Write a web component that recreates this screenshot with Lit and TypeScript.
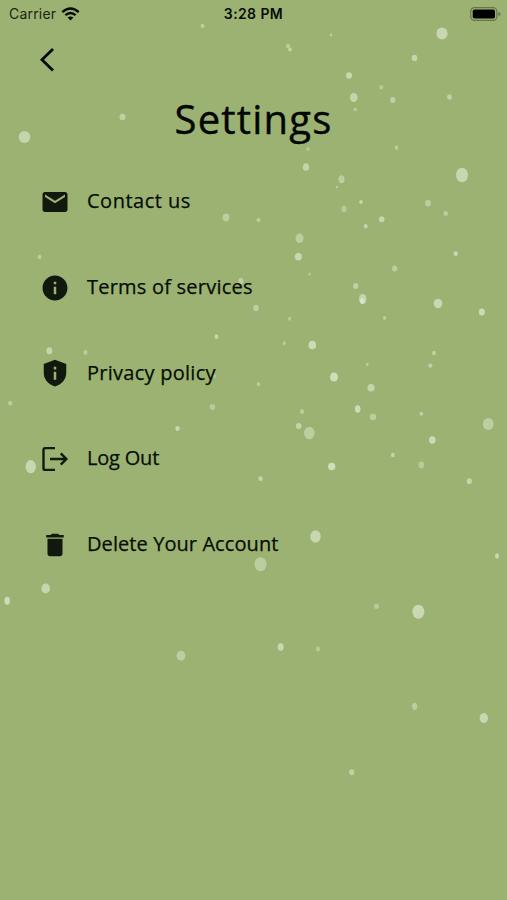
import { LitElement, html, css, svg } from "lit";
import { customElement } from "lit/decorators.js";
import { styleMap } from "lit/directives/style-map.js";

// Snowflakes: centre x, centre y, radius x, radius y, opacity
const FLAKES: number[][] = [
  [202.5, 26, 2, 2.3, 0.4], [122.5, 117, 3, 3.2, 0.45], [24.5, 137, 5.8, 6, 0.5],
  [288, 46, 2, 2.2, 0.4], [290, 49.5, 1.8, 2, 0.5], [331, 35, 1.4, 1.4, 0.4],
  [442, 33.5, 5.6, 6, 0.55], [414.5, 58, 2.8, 3.2, 0.5], [349, 75.5, 3, 3.2, 0.55],
  [381.3, 87.3, 2, 2.2, 0.35], [353.8, 97.5, 3.8, 4.5, 0.5], [392.8, 100, 2.7, 3, 0.45],
  [449.5, 97, 2.4, 2.8, 0.45], [355.3, 109.5, 2, 1.8, 0.35], [396.5, 147.8, 1.7, 2.2, 0.4],
  [308, 149, 1.8, 1.8, 0.35], [306, 167, 3.2, 3.8, 0.5], [462, 175, 6, 7.3, 0.55],
  [341.5, 179.3, 3, 4, 0.4], [337, 187, 1.2, 1.2, 0.4], [361, 202, 1.8, 2, 0.5],
  [428, 203.3, 3, 3.2, 0.4], [344, 209, 2.6, 3.2, 0.35], [445.7, 213.5, 2.3, 2.4, 0.4],
  [381.7, 219.3, 2.8, 3, 0.5], [365.7, 226.3, 2, 2.2, 0.5], [226, 217.5, 3.5, 4, 0.4],
  [258.5, 220, 2, 2, 0.4], [299.5, 238.3, 4, 4.8, 0.4], [298.3, 256.8, 3.6, 3.7, 0.55],
  [39.5, 257, 2, 2.2, 0.4], [455.7, 253.7, 2.2, 2.4, 0.55], [309.5, 274, 1.6, 1.6, 0.3],
  [394.7, 268.5, 2.7, 3, 0.4], [241, 281, 2.5, 3.3, 0.4], [355.7, 286, 2.6, 3, 0.45],
  [362.7, 299, 3.7, 5.3, 0.5], [362.3, 301, 2.2, 3, 0.5], [438, 303.5, 4.3, 4.8, 0.55],
  [481.8, 312, 3, 3.6, 0.6], [256, 308, 2.8, 3.2, 0.4], [289.5, 318.7, 1.7, 2, 0.35],
  [384.5, 318, 1.5, 2, 0.45], [216.5, 336.7, 2, 2.4, 0.5], [284.3, 343.3, 1.4, 2, 0.4],
  [312.3, 345, 3.8, 4.3, 0.6], [49.3, 350.7, 3, 3.5, 0.5], [85.5, 352.5, 2, 2.4, 0.4],
  [434, 353, 2, 2.3, 0.45], [430.3, 365.6, 2.2, 2.2, 0.45], [367.3, 364.5, 1.3, 1.8, 0.4],
  [334, 377, 4, 4.5, 0.65], [258.5, 384.3, 1.8, 2, 0.4], [371, 387.7, 3.6, 3.8, 0.5],
  [10.2, 403.3, 2.2, 2.3, 0.4], [212.5, 407, 2.8, 3, 0.35], [214, 376, 2, 2, 0.3],
  [302, 411.5, 1.9, 2.5, 0.4], [357.7, 409, 2.8, 3.8, 0.6], [373, 417, 3.2, 3.3, 0.4],
  [421.3, 413.7, 2, 2, 0.45], [488.3, 424, 5.4, 6, 0.42], [177.5, 428.5, 2.2, 2.4, 0.55],
  [298.7, 426, 2.8, 3, 0.5], [309.3, 433, 5.2, 6.3, 0.4], [432.3, 440, 3.2, 3.7, 0.6],
  [392.8, 455, 1.9, 2.3, 0.5], [421.3, 465, 3, 3.4, 0.35], [331.7, 466.5, 3.6, 3.8, 0.65],
  [30.7, 466.7, 5.2, 6.6, 0.55], [260.5, 478.7, 2.2, 2.4, 0.5], [469.3, 481.2, 2.6, 3, 0.5],
  [315.5, 536.5, 5.2, 6.2, 0.55], [497, 556, 1.9, 2.8, 0.55], [260.5, 564.3, 6, 7, 0.4],
  [45.7, 588.5, 4.3, 5, 0.52], [7.2, 600.8, 2.8, 4, 0.6], [376.5, 606.3, 2.5, 2.6, 0.35],
  [418.4, 611.7, 6, 7, 0.58], [280.7, 647, 3, 3.7, 0.55], [318, 649, 2, 2.4, 0.35],
  [181, 655.7, 4.4, 5, 0.4], [414.7, 706.3, 2.6, 3.6, 0.4], [483.8, 718, 4.2, 4.9, 0.55],
  [351.7, 772.3, 2.6, 3, 0.45],
];

const ICONS = {
  mail: svg`<path d="M20 4H4c-1.1 0-1.99.9-1.99 2L2 18c0 1.1.9 2 2 2h16c1.1 0 2-.9 2-2V6c0-1.1-.9-2-2-2zm0 4l-8 5-8-5V6l8 5 8-5v2z"/>`,
  info: svg`<path d="M12 2C6.48 2 2 6.48 2 12s4.48 10 10 10 10-4.480 10-10S17.520 2 12 2zm1 15h-2v-6h2v6zm0-8h-2V7h2v2z"/>`,
  shield: svg`<path fill-rule="evenodd" d="M12 1.300L3 4.800V12c0 4.900 3.800 9.400 9 10.700 5.200-1.300 9-5.800 9-10.700V4.800zM11 11h2v6.300h-2zM11 7h2v2.200h-2z"/>`,
  logout: svg`<path d="M12 3.300H4.200Q2.800 3.300 2.800 4.700V19.300Q2.800 20.700 4.200 20.700H12M8 12H21M16.600 7.500L21.100 12L16.600 16.500" fill="none" stroke="currentColor" stroke-width="1.900"/>`,
  trash: svg`<path d="M6 19c0 1.100.9 2 2 2h8c1.100 0 2-.9 2-2V7H6v12zM19 4h-3.500l-1-1h-5l-1 1H5v2h14V4z"/>`,
};

const ITEMS: { icon: keyof typeof ICONS; label: string; tracking: number }[] = [
  { icon: "mail", label: "Contact us", tracking: 0.5 },
  { icon: "info", label: "Terms of services", tracking: 0.22 },
  { icon: "shield", label: "Privacy policy", tracking: 0.26 },
  { icon: "logout", label: "Log Out", tracking: -0.2 },
  { icon: "trash", label: "Delete Your Account", tracking: 0.08 },
];

@customElement("app-root")
export class AppRoot extends LitElement {
  static styles = css`
    :host {
      display: block;
      position: relative;
      height: 900px;
      overflow: hidden;
      background: #9cb273;
      color: #070d04;
      font-family: "Open Sans", "Noto Sans", sans-serif;
    }
    .snow {
      position: absolute;
      inset: 0;
      filter: blur(0.4px);
    }
    .screen {
      position: relative;
      display: flex;
      flex-direction: column;
    }
    .status {
      display: grid;
      grid-template-columns: 1fr auto 1fr;
      align-items: center;
      height: 27px;
      padding: 0 6px 0 9px;
      font: 14px/27px Inter, sans-serif;
    }
    .carrier {
      display: flex;
      align-items: center;
      gap: 5px;
      color: #1b2412;
      letter-spacing: 0.2px;
    }
    .time {
      padding-right: 3px;
      font-weight: 600;
      letter-spacing: 0.4px;
    }
    .battery {
      justify-self: end;
    }
    svg {
      display: block;
    }
    .nav {
      height: 66px;
      padding: 20px 0 0 39px;
      box-sizing: border-box;
    }
    h1 {
      margin: 0;
      height: 52px;
      font-size: 40px;
      line-height: 51px;
      font-weight: 400;
      letter-spacing: 1.2px;
      -webkit-text-stroke: 0.4px currentColor;
      text-align: center;
      color: #030602;
    }
    .list {
      display: flex;
      flex-direction: column;
      margin: 0;
      padding: 14px 0 0 39.5px;
      list-style: none;
    }
    .item {
      display: flex;
      align-items: center;
      gap: 17.500px;
      height: 85.7px;
      font-size: 20px;
      line-height: 28px;
    }
    .label {
      margin-bottom: 1px;
      -webkit-text-stroke: 0.25px currentColor;
    }
    .icon {
      color: #11180d;
    }
  `;

  render() {
    return html`
      <svg class="snow" width="507" height="900" fill="#edf5e2">
        ${FLAKES.map(([x, y, rx, ry, o]) => svg`<ellipse cx=${x} cy=${y} rx=${rx} ry=${ry} opacity=${o} />`)}
      </svg>
      <div class="screen">
        <div class="status">
          <div class="carrier">
            <span>Carrier</span>
            <svg width="19" height="14" viewBox="0 0 19 14" fill="none" stroke="#050903" stroke-width="2.400">
              <path d="M1.300 5.100Q9.500 -2 17.700 5.100" />
              <path d="M4.400 8.200Q9.500 3.800 14.600 8.200" />
              <path d="M9.500 13.500L6.600 10.600Q9.500 8.200 12.400 10.600Z" fill="#050903" stroke="none" />
            </svg>
          </div>
          <span class="time">3:28 PM</span>
          <svg class="battery" width="31" height="14" viewBox="0 0 31 14">
            <rect x="0.800" y="0.600" width="26" height="12.800" rx="3.600" fill="none" stroke="#66754a" stroke-width="1.200" />
            <rect x="2.700" y="2.500" width="22.300" height="9" rx="1.800" fill="#000" />
            <path d="M28.400 4.700Q30.600 5.500 30.600 7T28.400 9.300Z" fill="#66754a" />
          </svg>
        </div>
        <div class="nav">
          <svg width="16" height="26" viewBox="0 0 16 26" fill="none" stroke="#050903" stroke-width="2.800">
            <path d="M14 2L3 12.700L14 23.400" />
          </svg>
        </div>
        <h1>Settings</h1>
        <ul class="list">
          ${ITEMS.map(
            (item) => html`<li class="item">
              <svg class="icon" width="30" height="30" viewBox="0 0 24 24" fill="currentColor">${ICONS[item.icon]}</svg>
              <span class="label" style=${styleMap({ letterSpacing: `${item.tracking}px` })}>${item.label}</span>
            </li>`
          )}
        </ul>
      </div>
    `;
  }
}
